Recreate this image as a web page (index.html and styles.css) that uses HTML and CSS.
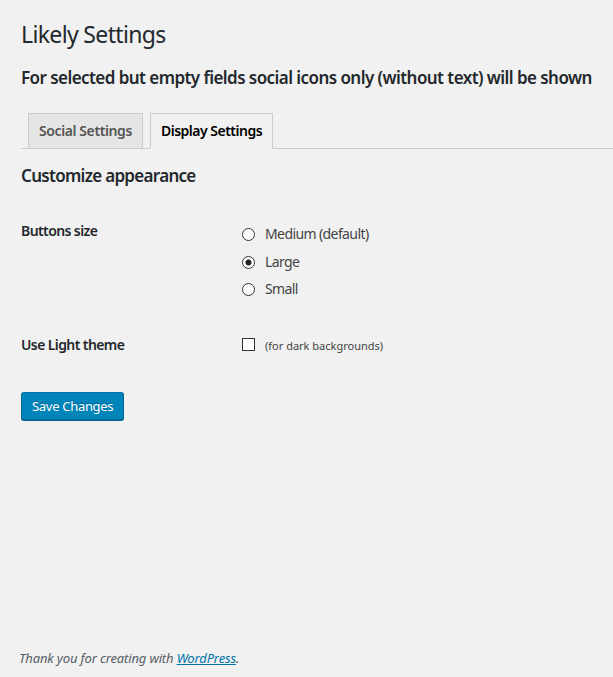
FILE: index.html
```html
<!DOCTYPE html>
<html lang="en">
<head>
<meta charset="utf-8">
<title>Likely Settings</title>
<link rel="stylesheet" href="styles.css">
</head>
<body>
<div class="page">
  <div class="wrap">
    <h1 class="title">Likely Settings</h1>
    <h2 class="note">For selected but empty fields social icons only (without text) will be shown</h2>
    <nav class="tabs">
      <a class="tab" href="#">Social Settings</a>
      <a class="tab tab-active" href="#">Display Settings</a>
    </nav>
    <form class="settings">
      <h2 class="section">Customize appearance</h2>
      <table class="form-table">
        <tbody>
          <tr>
            <th>Buttons size</th>
            <td>
              <fieldset class="choices">
                <label class="choice"><input type="radio" name="size" class="radio"> <span>Medium (default)</span></label>
                <label class="choice"><input type="radio" name="size" class="radio" checked> <span>Large</span></label>
                <label class="choice"><input type="radio" name="size" class="radio"> <span>Small</span></label>
              </fieldset>
            </td>
          </tr>
          <tr>
            <th>Use Light theme</th>
            <td class="td-check">
              <label class="check"><input type="checkbox" class="checkbox"> <span class="hint">(for dark backgrounds)</span></label>
            </td>
          </tr>
        </tbody>
      </table>
      <p class="submit"><button type="button" class="button-primary">Save Changes</button></p>
    </form>
  </div>
  <footer class="footer">
    <span class="thanks">Thank you for creating with <a href="#">WordPress</a>.</span>
  </footer>
</div>
</body>
</html>
```
FILE: styles.css
```css
html, body {
  margin: 0;
  padding: 0;
  background: #f1f1f1;
}
body {
  font-family: "Noto Sans", "Open Sans", sans-serif;
  font-size: 13px;
  color: #23282d;
}
.page {
  min-height: 100vh;
  display: flex;
  flex-direction: column;
}
.wrap {
  padding: 10px 0 0 21px;
}
.title {
  font-size: 23px;
  font-weight: 400;
  line-height: 30px;
  letter-spacing: -0.65px;
  margin: 0;
  padding: 9px 0 4px;
  color: #23282d;
}
.note {
  font-size: 17px;
  font-weight: 600;
  line-height: 24px;
  letter-spacing: -0.56px;
  white-space: nowrap;
  margin: 13px 0 0;
  color: #23282d;
}
.tabs {
  margin-top: 23px;
  border-bottom: 1px solid #ccc;
  display: flex;
  align-items: flex-end;
  padding-left: 7px;
  gap: 7px;
}
.tab {
  display: block;
  padding: 5px 10px;
  font-size: 14px;
  font-weight: 600;
  line-height: 24px;
  letter-spacing: -0.4px;
  border: 1px solid #ccc;
  background: #e5e5e5;
  color: #555;
  text-decoration: none;
  margin-bottom: -1px;
}
.tab-active {
  background: #f1f1f1;
  color: #000;
  border-bottom-color: #f1f1f1;
  letter-spacing: -0.5px;
}
.settings {
  margin: 0;
}
.section {
  font-size: 17px;
  font-weight: 600;
  line-height: 24px;
  letter-spacing: -0.7px;
  margin: 15px 0 0;
  color: #23282d;
}
.form-table {
  border-collapse: collapse;
  margin-top: 14px;
}
.form-table th {
  width: 200px;
  padding: 20px 10px 20px 0;
  text-align: left;
  vertical-align: top;
  font-size: 14px;
  font-weight: 600;
  line-height: 18px;
  letter-spacing: -0.6px;
  color: #23282d;
}
.form-table td {
  padding: 22px 10px 17px 11px;
  vertical-align: top;
  font-size: 14px;
  color: #444;
}
.form-table .td-check {
  padding-top: 20px;
}
.choices {
  border: 0;
  margin: 0;
  padding: 0;
  display: flex;
  flex-direction: column;
  gap: 7.5px;
}
.choice {
  display: flex;
  align-items: flex-start;
  gap: 10px;
  line-height: 20px;
  letter-spacing: -0.6px;
}
.radio {
  appearance: none;
  -webkit-appearance: none;
  margin: 4px 0 0;
  width: 13px;
  height: 13px;
  border: 1px solid #333;
  border-radius: 50%;
  background: #fff;
  box-sizing: border-box;
  flex: none;
}
.radio:checked {
  background: radial-gradient(circle, #222 0 2.6px, #fff 3.4px);
}
.check {
  display: flex;
  align-items: center;
  gap: 10px;
  line-height: 20px;
}
.checkbox {
  appearance: none;
  -webkit-appearance: none;
  margin: 0 0 3px;
  width: 13px;
  height: 13px;
  border: 1px solid #333;
  background: #fff;
  box-sizing: border-box;
  flex: none;
}
.hint {
  font-size: 11px;
  color: #444;
}
.submit {
  margin: 18px 0 0;
}
.button-primary {
  font-family: inherit;
  font-size: 13px;
  line-height: 26px;
  height: 28px;
  padding: 0 10px;
  letter-spacing: -0.3px;
  border: 1px solid #0073aa;
  border-color: #0073aa #006799 #006799;
  border-radius: 3px;
  background: #0085ba;
  color: #fff;
  box-shadow: 0 1px 0 #006799;
  text-shadow: 0 -1px 1px #006799;
  cursor: pointer;
}
.footer {
  margin-top: auto;
  padding: 0 0 9px 19px;
  line-height: 20px;
}
.thanks {
  font-style: italic;
  color: #555d66;
  font-size: 13px;
  letter-spacing: -0.15px;
}
.thanks a {
  color: #0073aa;
}
```
